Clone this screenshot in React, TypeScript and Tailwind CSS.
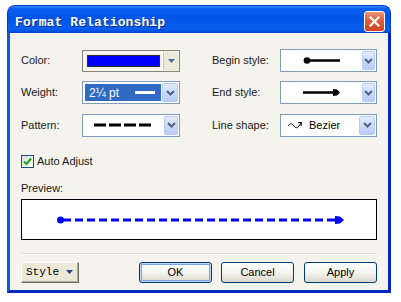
import React from "react";

const ui = { fontFamily: '"Liberation Sans", Arial, sans-serif' };
const mono = { fontFamily: '"Liberation Mono", "Courier New", monospace' };

const Chevron = () => (
  <svg width="9" height="6" viewBox="0 0 9 6">
    <path d="M1 1 L4.5 4.5 L8 1" fill="none" stroke="#4d6185" strokeWidth="2" />
  </svg>
);

const XpCombo = ({ children, selected }: { children: React.ReactNode; selected?: boolean }) => (
  <div className="flex h-[23px] border border-[#7f9db9] bg-white p-[1px]">
    <div className={`flex-1 m-[1px] flex items-center ${selected ? "bg-[#316ac5] text-white" : ""}`}>{children}</div>
    <div className="w-[16px] flex items-center justify-center rounded-[2px] border border-[#b7c9f5] bg-linear-to-b from-[#e3ebfe] to-[#b6cbf7]">
      <Chevron />
    </div>
  </div>
);

const ColorCombo = () => (
  <div className="flex h-[22px] border border-[#8a877a] bg-[#f3f1e6] p-[1px]">
    <div className="flex-1 flex border border-white p-[2px]">
      <div className="flex-1 bg-[#0000ff] border border-[#2b2b2b]" />
    </div>
    <div className="w-[15px] flex items-center justify-center bg-[#ece9d8] border-l border-[#c9c6b8]">
      <svg width="7" height="4" viewBox="0 0 7 4">
        <path d="M0 0 H7 L3.5 4 Z" fill="#4a6a9c" />
      </svg>
    </div>
  </div>
);

const Label = ({ children, w }: { children: React.ReactNode; w: string }) => (
  <div className={`${w} text-[11px] text-[#1a1a1a]`}>{children}</div>
);

const XpButton = ({ children, def }: { children: React.ReactNode; def?: boolean }) => (
  <button
    className={`w-[73px] h-[21px] rounded-[3px] border border-[#003c74] bg-linear-to-b from-white via-[#f4f4f0] to-[#dcd7cb] text-[11px] text-black ${
      def ? "shadow-[inset_0_0_0_1px_#c2d6f8,inset_0_0_0_2px_#7fa2e8]" : ""
    }`}
    style={ui}
  >
    {children}
  </button>
);

export default function App() {
  return (
    <div className="w-[401px] h-[302px] bg-white pl-[7px] pt-[5px]" style={ui}>
      <div className="w-[384px] h-[288px] flex flex-col">
        {/* title bar */}
        <div className="h-[28px] rounded-t-[8px] flex items-start justify-between pl-[7px] pr-[5px] pt-[5px] bg-[linear-gradient(180deg,#3a8cff_0%,#0a5eee_10%,#0055e8_45%,#0a5ff0_85%,#0050e0_94%,#0042c8_100%)] border border-b-0 border-[#0a3fc4]">
          <span
            className="mt-[2px] text-[13px] font-bold text-white [text-shadow:1px_1px_0_#0b2a8f] tracking-[0.1px]"
            style={mono}
          >
            Format Relationship
          </span>
          <div className="w-[21px] h-[21px] rounded-[3px] border border-white flex items-center justify-center bg-[linear-gradient(180deg,#eb9474_0%,#de5f3a_45%,#cc4520_100%)]">
            <svg width="11" height="11" viewBox="0 0 11 11">
              <path d="M1.5 1.5 L9.5 9.5 M9.5 1.5 L1.5 9.5" stroke="white" strokeWidth="2.2" strokeLinecap="square" />
            </svg>
          </div>
        </div>

        {/* body */}
        <div className="flex-1 border-l-[3px] border-r-[3px] border-b-[3px] border-l-[#0b5be6] border-r-[#0025c0] border-b-[#0025c0] bg-[#f4f3ee] px-[11px] pt-[16px] flex flex-col">
          <div className="flex items-center h-[23px]">
            <Label w="w-[61px]">Color:</Label>
            <div className="w-[98px]">
              <ColorCombo />
            </div>
            <div className="w-[32px]" />
            <Label w="w-[68px]">Begin style:</Label>
            <div className="w-[97px]">
              <XpCombo>
                <svg width="78" height="19" viewBox="0 0 78 19">
                  <circle cx="24" cy="9.5" r="3.3" fill="black" />
                  <line x1="24" y1="9.5" x2="57" y2="9.5" stroke="black" strokeWidth="2.5" />
                </svg>
              </XpCombo>
            </div>
          </div>

          <div className="flex items-center h-[23px] mt-[9px]">
            <Label w="w-[61px]">Weight:</Label>
            <div className="w-[98px]">
              <XpCombo selected>
                <span className="pl-[4px] text-[12px] w-[50px]">2¼ pt</span>
                <div className="w-[20px] h-[3px] bg-white" />
              </XpCombo>
            </div>
            <div className="w-[32px]" />
            <Label w="w-[68px]">End style:</Label>
            <div className="w-[97px]">
              <XpCombo>
                <svg width="78" height="19" viewBox="0 0 78 19">
                  <line x1="20" y1="9.5" x2="52" y2="9.5" stroke="black" strokeWidth="2.5" />
                  <path d="M50 6 L54 6.5 L57 9.5 L54 12.5 L50 13 Z" fill="black" />
                </svg>
              </XpCombo>
            </div>
          </div>

          <div className="flex items-center h-[24px] mt-[9px]">
            <Label w="w-[61px]">Pattern:</Label>
            <div className="w-[98px]">
              <XpCombo>
                <svg width="78" height="20" viewBox="0 0 78 20">
                  <line x1="9" y1="10" x2="68" y2="10" stroke="black" strokeWidth="3" strokeDasharray="12 3" />
                </svg>
              </XpCombo>
            </div>
            <div className="w-[32px]" />
            <Label w="w-[68px]">Line shape:</Label>
            <div className="w-[97px]">
              <XpCombo>
                <svg width="16" height="10" viewBox="0 0 16 10" className="ml-[4px]">
                  <path d="M1 6 C3 3 5 3 7 6 S11 8 14 3" fill="none" stroke="black" strokeWidth="1" />
                  <path d="M11 2.5 L14.5 2.5 L14 6" fill="none" stroke="black" strokeWidth="1" />
                </svg>
                <span className="ml-[6px] text-[11px]">Bezier</span>
              </XpCombo>
            </div>
          </div>

          {/* checkbox */}
          <div className="flex items-center mt-[18px] h-[13px]">
            <div className="w-[13px] h-[13px] border border-[#1c5180] bg-linear-to-br from-[#dcdcd7] to-white flex items-center justify-center">
              <svg width="9" height="9" viewBox="0 0 9 9">
                <path d="M1 4.5 L3.5 7 L8 1.5" fill="none" stroke="#21a121" strokeWidth="2" />
              </svg>
            </div>
            <span className="ml-[3px] text-[11px] text-[#1a1a1a]">Auto Adjust</span>
          </div>

          <div className="mt-[14px] text-[11px] leading-[13px] text-[#1a1a1a]">Preview:</div>

          {/* preview */}
          <div className="mt-[4px] h-[41px] border border-black bg-white">
            <svg width="355" height="39" viewBox="0 0 355 39">
              <circle cx="38.5" cy="20" r="3.5" fill="#0000ff" />
              <line x1="41" y1="20" x2="314" y2="20" stroke="#0000ff" strokeWidth="3" strokeDasharray="8 4" />
              <path d="M313 16 L318 16.5 L322 20 L318 23.5 L313 24 Z" fill="#0000ff" />
            </svg>
          </div>

          <div className="mt-[13px] h-[1px] bg-[#dcd8c4] shadow-[0_1px_0_white]" />

          {/* buttons */}
          <div className="flex items-center mt-[8px]">
            <button
              className="w-[58px] h-[21px] -mt-[1px] flex items-center pl-[4px] bg-[#ece9d8] border border-t-white border-l-white border-r-[#716f64] border-b-[#716f64] shadow-[inset_-1px_-1px_0_#aca899]"
            >
              <span className="text-[11px] text-black" style={mono}>
                Style
              </span>
              <svg width="7" height="4" viewBox="0 0 7 4" className="ml-[7px]">
                <path d="M0 0 H7 L3.5 4 Z" fill="#1f3f7f" />
              </svg>
            </button>
            <div className="flex-1" />
            <XpButton def>OK</XpButton>
            <div className="w-[9px]" />
            <XpButton>Cancel</XpButton>
            <div className="w-[10px]" />
            <XpButton>Apply</XpButton>
          </div>
        </div>
      </div>
    </div>
  );
}
